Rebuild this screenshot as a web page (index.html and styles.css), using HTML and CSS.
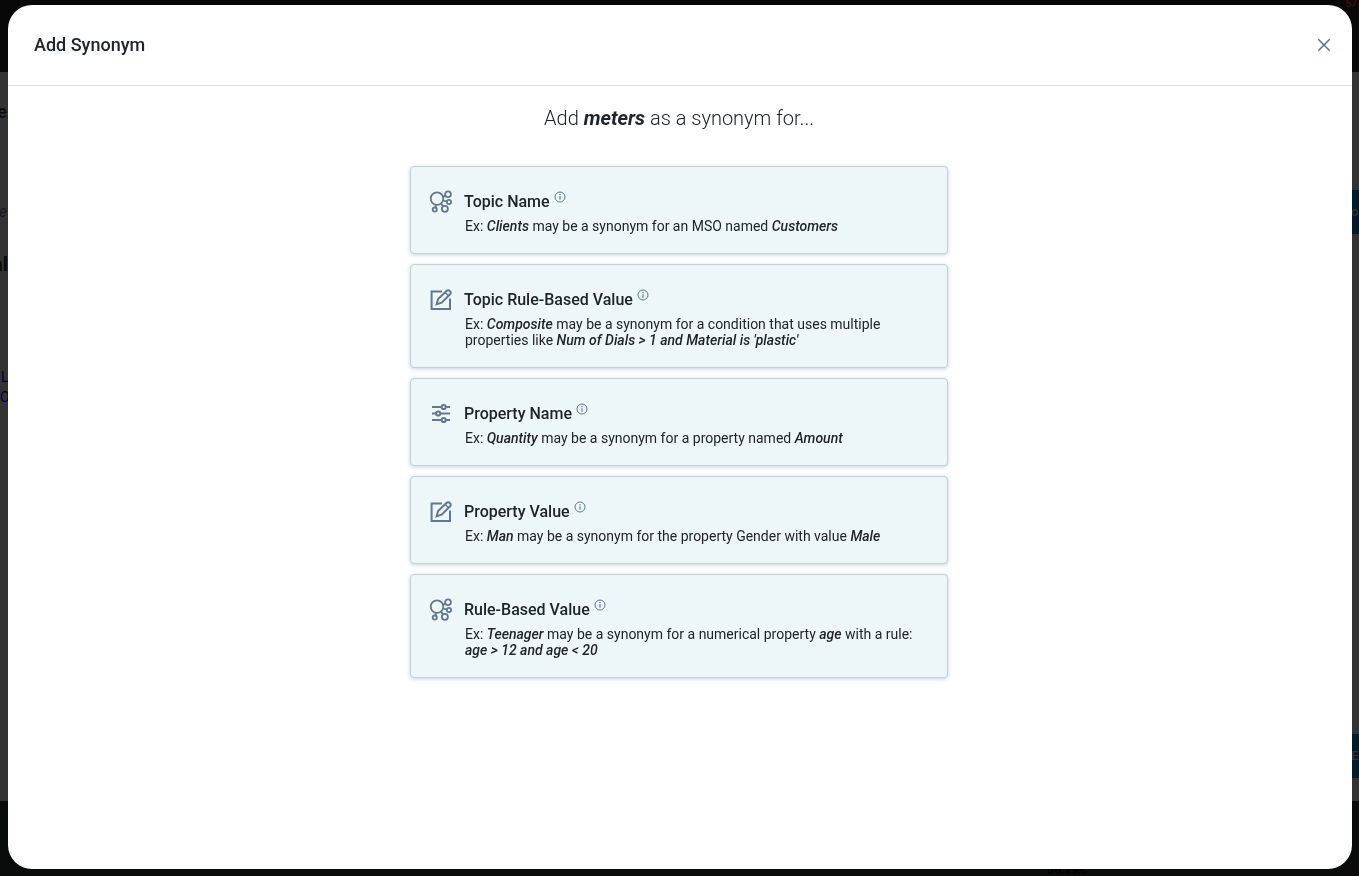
FILE: index.html
```html
<!DOCTYPE html>
<html lang="en">
<head>
    <meta charset="UTF-8">
    <meta name="viewport" content="width=device-width, initial-scale=1.0">
    <title>Add Synonym</title>
    <link rel="stylesheet" href="styles.css">
</head>
<body>
<svg class="sprite" aria-hidden="true">
    <symbol id="icon-topic" viewBox="0 0 24 24">
        <g fill="none" stroke="currentColor" stroke-width="1.8">
            <circle cx="8" cy="8.6" r="6.3"/>
            <circle cx="19" cy="4.2" r="2.9"/>
            <circle cx="20" cy="12" r="2.1"/>
            <circle cx="5.8" cy="19.6" r="2.1"/>
            <circle cx="15.9" cy="18.8" r="3"/>
            <path d="M14 7l2.3-1.400M14.200 10.400l3.800 1.100M7 14.900l-.6 2.700M12 13.600l2.200 2.800"/>
        </g>
    </symbol>
    <symbol id="icon-edit" viewBox="0 0 24 24">
        <g fill="none" stroke="currentColor" stroke-width="2">
            <path d="M13 3.400H2.600v17.600h18.400V10.500"/>
            <path d="M7.600 16.200l1.500-5.200 8.600-8.200a2 2 0 0 1 2.900 0l.5.5a2 2 0 0 1 0 2.900l-8.400 8.500z"/>
            <path d="M16.200 4.400l3.300 3.300" stroke-width="1.400"/>
        </g>
    </symbol>
    <symbol id="icon-sliders" viewBox="0 0 24 24">
        <g fill="none" stroke="currentColor" stroke-width="2">
            <path d="M3 5h9.300M17.300 5h3.800M3 11.500h3.700M11.700 11.500h9.400M3 18h9.300M17.300 18h3.800"/>
            <circle cx="14.700" cy="5" r="2.100"/>
            <circle cx="9.200" cy="11.500" r="2.100"/>
            <circle cx="14.700" cy="18" r="2.100"/>
        </g>
    </symbol>
    <symbol id="icon-info" viewBox="0 0 12 12">
        <circle cx="6" cy="6" r="5" fill="none" stroke="currentColor"/>
        <path d="M6 5.200v3.600M6 3v1.200" stroke="currentColor" stroke-width="1.100"/>
    </symbol>
</svg>

<div class="page" aria-hidden="true">
    <div class="page-header"><span class="badge">57</span></div>
    <div class="page-main">
        <div class="edge">
            <span class="edge-title">e</span>
            <em class="edge-note">e</em>
            <span class="edge-heading">al</span>
            <span class="edge-link">L</span>
            <span class="edge-link">O</span>
        </div>
        <div class="edge edge-right">
            <div class="edge-action">on</div>
            <div class="edge-action">Ex</div>
        </div>
    </div>
    <div class="page-footer"><span class="total">56.29K</span></div>
</div>

<div class="overlay">
    <div class="modal" role="dialog" aria-modal="true" aria-labelledby="modal-title">
        <header class="modal-header">
            <h1 class="modal-title" id="modal-title">Add Synonym</h1>
            <button class="close" type="button" aria-label="Close">
                <svg class="close-icon" viewBox="0 0 14 14"><path d="M1.300 1.300l11.400 11.400M12.700 1.300L1.300 12.700" stroke="currentColor" stroke-width="1.500"/></svg>
            </button>
        </header>
        <main class="modal-body">
            <h2 class="prompt">Add <em>meters</em> as a synonym for...</h2>
            <div class="options">
                <button class="option" type="button">
                    <svg class="option-icon"><use href="#icon-topic"/></svg>
                    <span class="option-text">
                        <span class="option-name">Topic Name<svg class="info"><use href="#icon-info"/></svg></span>
                        <span class="option-example">Ex: <em>Clients</em> may be a synonym for an MSO named <em>Customers</em></span>
                    </span>
                </button>
                <button class="option" type="button">
                    <svg class="option-icon"><use href="#icon-edit"/></svg>
                    <span class="option-text">
                        <span class="option-name">Topic Rule-Based Value<svg class="info"><use href="#icon-info"/></svg></span>
                        <span class="option-example">Ex: <em>Composite</em> may be a synonym for a condition that uses multiple properties like <em>Num of Dials &gt; 1 and Material is 'plastic'</em></span>
                    </span>
                </button>
                <button class="option" type="button">
                    <svg class="option-icon"><use href="#icon-sliders"/></svg>
                    <span class="option-text">
                        <span class="option-name">Property Name<svg class="info"><use href="#icon-info"/></svg></span>
                        <span class="option-example">Ex: <em>Quantity</em> may be a synonym for a property named <em>Amount</em></span>
                    </span>
                </button>
                <button class="option" type="button">
                    <svg class="option-icon"><use href="#icon-edit"/></svg>
                    <span class="option-text">
                        <span class="option-name">Property Value<svg class="info"><use href="#icon-info"/></svg></span>
                        <span class="option-example">Ex: <em>Man</em> may be a synonym for the property Gender with value <em>Male</em></span>
                    </span>
                </button>
                <button class="option" type="button">
                    <svg class="option-icon"><use href="#icon-topic"/></svg>
                    <span class="option-text">
                        <span class="option-name">Rule-Based Value<svg class="info"><use href="#icon-info"/></svg></span>
                        <span class="option-example">Ex: <em>Teenager</em> may be a synonym for a numerical property <em>age</em> with a rule: <em>age &gt; 12 and age &lt; 20</em></span>
                    </span>
                </button>
            </div>
        </main>
    </div>
</div>
</body>
</html>
```

FILE: styles.css
```css
* {
    box-sizing: border-box;
}

body {
    margin: 0;
    font-family: Roboto, "Liberation Sans", sans-serif;
    color: #212529;
    background-color: #333;
    overflow: hidden;
}

.sprite {
    display: none;
}

/* dimmed page behind the dialog */
.page {
    display: flex;
    flex-direction: column;
    height: 100vh;
    overflow: hidden;
}

.page-header {
    display: flex;
    align-items: flex-start;
    justify-content: flex-end;
    height: 72px;
    background-color: #080808;
}

.badge {
    padding: 0 2px;
    border-radius: 0 0 6px 6px;
    font-size: 10px;
    line-height: 7px;
    color: #222;
    background-color: #1c0204;
}

.page-main {
    display: flex;
    flex: 1;
    justify-content: space-between;
}

.page-footer {
    display: flex;
    align-items: flex-end;
    justify-content: flex-end;
    height: 75px;
    padding-right: 273px;
    background-color: #090a0a;
}

.total {
    font-size: 12px;
    font-weight: 700;
    line-height: 12px;
    color: #000;
}

.edge {
    display: flex;
    flex-direction: column;
    align-items: flex-end;
    width: 8px;
    color: #0b0d0e;
    font-size: 16px;
    line-height: 20px;
}

.edge-title {
    margin-top: 30px;
    padding-right: 1px;
    font-size: 18px;
    font-weight: 500;
}

.edge-note {
    margin-top: 80px;
    padding-right: 1px;
    color: #16191b;
}

.edge-heading {
    margin-top: 32px;
    font-size: 20px;
    font-weight: 700;
}

.edge-link {
    align-self: flex-start;
    color: #000033;
    font-size: 14px;
}

.edge-heading + .edge-link {
    margin-top: 93px;
    padding-left: 1px;
}

.edge-right {
    align-items: stretch;
    justify-content: space-between;
    padding: 118px 0 23px;
}

.edge-action {
    height: 44px;
    overflow: hidden;
    font-size: 13px;
    font-weight: 500;
    line-height: 44px;
    color: #333;
    background-color: #001a2e;
}

.overlay {
    position: fixed;
    inset: 0;
    display: flex;
    padding: 5px 7px 7px 8px;
}

.modal {
    flex: 1;
    background-color: #fff;
    border-radius: 24px;
    overflow: auto;
}

.modal-header {
    display: flex;
    align-items: center;
    justify-content: space-between;
    height: 81px;
    padding: 0 17px 0 26px;
    border-bottom: 1px solid #dcdfe0;
}

.modal-title {
    margin: 0;
    font-size: 18px;
    font-weight: 500;
    line-height: 24px;
}

.close {
    display: flex;
    padding: 4px;
    border: 0;
    color: #5f7285;
    background: none;
    cursor: pointer;
}

.close-icon {
    width: 14px;
    height: 14px;
}

.modal-body {
    display: flex;
    flex-direction: column;
    align-items: center;
    padding: 20px 25px 20px 23px;
}

.prompt {
    margin: 0 0 36px;
    font-size: 20px;
    font-weight: 300;
    line-height: 24px;
}

.prompt em {
    font-weight: 700;
}

.options {
    display: flex;
    flex-direction: column;
    gap: 10px;
    width: 100%;
    max-width: 538px;
}

.option {
    display: flex;
    gap: 11px;
    padding: 23px 18px 19px;
    border: 1px solid #c8ced2;
    border-radius: 4px;
    font-family: inherit;
    text-align: left;
    color: inherit;
    background-color: #edf6f9;
    box-shadow: 0 1px 4px rgba(60, 110, 150, .3);
    cursor: pointer;
}

.option-icon {
    flex: none;
    width: 24px;
    height: 24px;
    color: #64788c;
}

.option-text {
    flex: 1;
}

.option-name {
    display: flex;
    gap: 4px;
    margin-bottom: 4px;
    font-size: 16px;
    font-weight: 500;
    line-height: 24px;
}

.info {
    width: 12px;
    height: 12px;
    margin-top: 1px;
    color: #64788c;
}

.option-example {
    display: block;
    padding-left: 1px;
    font-size: 14px;
    line-height: 16px;
}

.option-example em {
    font-weight: 500;
}
```
